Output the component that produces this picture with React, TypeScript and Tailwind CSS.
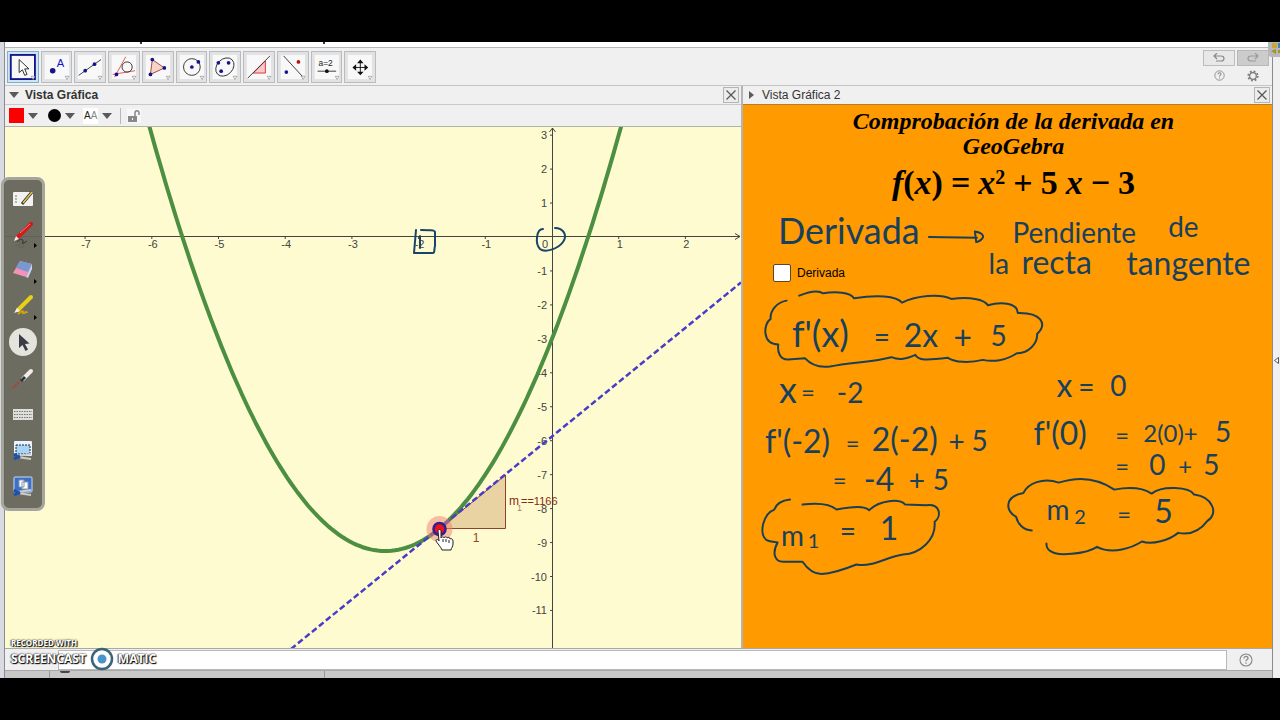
import React, { ReactNode } from "react";

const ORIGIN_X = 547;
const ORIGIN_Y = 110;
const UNIT_X = 66.7;
const UNIT_Y = 33.95;

const px = (x: number) => ORIGIN_X + x * UNIT_X;
const py = (y: number) => ORIGIN_Y - y * UNIT_Y;

const parabola = Array.from({ length: 141 }, (_, i) => {
  const x = -6.1 + i * 0.052;
  return `${px(x).toFixed(1)},${py(x * x + 5 * x - 3).toFixed(1)}`;
}).join(" ");

const dot = "#14148c";

const tools: { name: string; icon: ReactNode }[] = [
  {
    name: "Elige y mueve",
    icon: <path d="M12 8v14l3.500-3 2.500 6 2.500-1-2.500-6h4.500z" fill="#fff" stroke="#222" />,
  },
  {
    name: "Punto",
    icon: (
      <>
        <circle cx="11.500" cy="20" r="3" fill={dot} />
        <text x="16" y="16" fontSize="12" fill="#1414c8">A</text>
      </>
    ),
  },
  {
    name: "Recta",
    icon: (
      <>
        <path d="M4 25L28 8" stroke="#333" />
        <circle cx="11" cy="20" r="2" fill={dot} />
        <circle cx="21" cy="13" r="2" fill={dot} />
      </>
    ),
  },
  {
    name: "Tangentes",
    icon: (
      <>
        <path d="M6 27L18 5M4 24L28 20" stroke="#e05050" />
        <circle cx="19.500" cy="16" r="5.500" fill="none" stroke="#333" />
        <circle cx="8" cy="24" r="2" fill={dot} />
      </>
    ),
  },
  {
    name: "Polígono",
    icon: (
      <>
        <path d="M10 8l13 9-15 7z" fill="#f6d4c8" stroke="#a04040" />
        <circle cx="10" cy="8" r="2" fill={dot} />
        <circle cx="23" cy="17" r="2" fill={dot} />
        <circle cx="8" cy="24" r="2" fill={dot} />
      </>
    ),
  },
  {
    name: "Circunferencia",
    icon: (
      <>
        <circle cx="16" cy="16" r="9" fill="none" stroke="#333" />
        <circle cx="16" cy="16" r="2" fill={dot} />
        <circle cx="23" cy="10.500" r="2" fill={dot} />
      </>
    ),
  },
  {
    name: "Elipse",
    icon: (
      <>
        <ellipse cx="16" cy="16" rx="11" ry="8.500" transform="rotate(-45 16 16)" fill="none" stroke="#333" />
        <circle cx="9" cy="11.500" r="2" fill={dot} />
        <circle cx="20" cy="11.500" r="2" fill={dot} />
        <circle cx="12" cy="20.500" r="2" fill={dot} />
      </>
    ),
  },
  {
    name: "Pendiente",
    icon: (
      <>
        <path d="M10 22.500L23 9.500v13z" fill="#fbc8c8" stroke="#d83030" />
        <path d="M4 28L28 4" stroke="#333" />
      </>
    ),
  },
  {
    name: "Simetría axial",
    icon: (
      <>
        <path d="M6 4l22 24" stroke="#333" />
        <circle cx="9" cy="21.500" r="2" fill={dot} />
        <circle cx="22" cy="10.500" r="2" fill="#b01818" />
      </>
    ),
  },
  {
    name: "Deslizador",
    icon: (
      <>
        <text x="7" y="15" fontSize="9" fill="#222">a=2</text>
        <path d="M6 20.500h20" stroke="#333" />
        <circle cx="16" cy="20.500" r="2" fill="#111" />
      </>
    ),
  },
  {
    name: "Desplaza vista gráfica",
    icon: (
      <>
        <path d="M9 16.500h14M16.500 9v14" stroke="#111" />
        <path d="M16.500 8l3.500 4h-7zM16.500 25l3.500-4h-7zM8 16.500l4-3.500v7zM25 16.500l-4-3.500v7z" fill="#111" />
      </>
    ),
  },
];

function Tool({ name, icon, active }: { name: string; icon: ReactNode; active: boolean }) {
  return (
    <button
      aria-label={name}
      className={
        active
          ? "h-8 border border-[#7fb0d0] bg-[#cfe4f2]"
          : "h-8 border border-[#b8bcc0] bg-[#e2e2e2]"
      }
    >
      <svg viewBox="0 0 32 32" className="h-full w-full font-['Liberation_Sans',sans-serif]">
        <rect x="3" y="3" width="26" height="26" fill="#f8f8f8" stroke={active ? "#14148c" : "none"} strokeWidth="2" />
        {icon}
        <path d="M25 26h4l-2 3.500z" fill="#fff" stroke="#888" strokeWidth=".7" />
      </svg>
    </button>
  );
}

function Caret() {
  return (
    <svg viewBox="0 0 10 6" className="h-1.5 w-2.5">
      <path d="M0 0h10L5 6z" fill="#5a5a5a" />
    </svg>
  );
}

function CloseButton({ label }: { label: string }) {
  return (
    <button aria-label={label} className="flex size-4 items-center justify-center border border-[#b4b4b4] bg-[#ececec]">
      <svg viewBox="0 0 12 12" className="size-3">
        <path d="M1.500 1.500l9 9M10.500 1.500l-9 9" stroke="#555" strokeWidth="1.200" />
      </svg>
    </button>
  );
}

function Graph() {
  const xs = [-8, -7, -6, -5, -4, -3, -2, -1, 1, 2];
  const ys = [3, 2, 1, -1, -2, -3, -4, -5, -6, -7, -8, -9, -10, -11];
  return (
    <svg
      viewBox="0 0 736 521"
      preserveAspectRatio="xMaxYMin slice"
      className="block h-[521px] w-full bg-[#fefbd0] font-['Liberation_Sans',sans-serif] text-[11px]"
    >
      <path d="M0 109.500H735M730 106.500l5 3-5 3M547.500 521V1M544.500 5l3-4 3 4" fill="none" stroke="#444" />
      {xs.map((x) => (
        <g key={x}>
          <path d={`M${px(x)} 109v3`} stroke="#444" />
          <text x={px(x) + 1} y="121" textAnchor="middle" fill="#444">{x}</text>
        </g>
      ))}
      {ys.map((y) => (
        <g key={y}>
          <path d={`M545 ${py(y)}h3`} stroke="#444" />
          <text x="542" y={py(y) + 4} textAnchor="end" fill="#444">{y}</text>
        </g>
      ))}
      <text x="537" y="121" fill="#444">0</text>
      <polyline points={parabola} fill="none" stroke="#4c8f42" strokeWidth="4" />
      <path d="M435 401.500h65.500V348z" fill="#c08040" fillOpacity=".32" stroke="#8c4030" />
      <path d="M286 522L736 155.500" stroke="#4a3cc8" strokeWidth="2.500" strokeDasharray="6 3" />
      <text x="471" y="415" textAnchor="middle" fontSize="12" fill="#8c4a20">1</text>
      <text x="504" y="378" fontSize="12" fill="#8c2a10">m</text>
      <text x="512" y="384" fontSize="9" fill="#b08060">1</text>
      <text x="516" y="378" fontSize="11" fill="#8c2a10">==1166</text>
      <circle cx="434.500" cy="402" r="13" fill="#f08070" fillOpacity=".5" />
      <circle cx="434.500" cy="402" r="6" fill="#f01020" stroke="#30208c" strokeWidth="2.500" />
      <path
        transform="translate(-1 -1)"
        d="M434 405c0-2 3-2 3 0v7c1-2 3-1 3 0 1-2 3-1 3 0 1-1 3-1 3 1 1-1 3 0 3 2v3c0 3-2 4-2 6h-9c-1-3-5-7-6-9 0-2 2-2 3 0z"
        fill="#fff"
        stroke="#222"
      />
      <path d="M438 412v3M441 412v3M444 413v3" stroke="#222" />
      <g fill="none" stroke="#174468" strokeWidth="2" strokeLinecap="round" strokeLinejoin="round">
        <path d="M411 103l-2 23h19c2 0 1-4 2-7v-14c0-2-7-2-14-2M415 109v12" />
        <path d="M538 102c-7 0-8 15-3 20 5 4 18 0 23-7 5-7 0-14-8-14" />
      </g>
    </svg>
  );
}

type Stroke = { text: string; x: number; y: number; size: 20 | 24 | 28 | 32 | 36 };

const notes: Stroke[] = [
  { text: "Derivada", x: 35, y: 139, size: 36 },
  { text: "Pendiente", x: 270, y: 138, size: 28 },
  { text: "de", x: 426, y: 132, size: 28 },
  { text: "la", x: 246, y: 169, size: 28 },
  { text: "recta", x: 279, y: 169, size: 32 },
  { text: "tangente", x: 384, y: 170, size: 32 },
  { text: "f'(x)", x: 49, y: 242, size: 36 },
  { text: "=", x: 131, y: 242, size: 28 },
  { text: "2x", x: 161, y: 242, size: 32 },
  { text: "+", x: 211, y: 244, size: 32 },
  { text: "5", x: 248, y: 241, size: 28 },
  { text: "x", x: 36, y: 299, size: 36 },
  { text: "=", x: 58, y: 297, size: 24 },
  { text: "-2", x: 94, y: 299, size: 28 },
  { text: "f'(-2)", x: 22, y: 349, size: 32 },
  { text: "=", x: 103, y: 348, size: 24 },
  { text: "2(-2)", x: 129, y: 347, size: 32 },
  { text: "+", x: 206, y: 348, size: 28 },
  { text: "5", x: 229, y: 347, size: 28 },
  { text: "=", x: 90, y: 385, size: 24 },
  { text: "-4", x: 121, y: 387, size: 32 },
  { text: "+", x: 166, y: 387, size: 28 },
  { text: "5", x: 190, y: 386, size: 28 },
  { text: "m", x: 38, y: 442, size: 28 },
  { text: "1", x: 65, y: 444, size: 20 },
  { text: "=", x: 97, y: 437, size: 28 },
  { text: "1", x: 137, y: 436, size: 32 },
  { text: "x", x: 314, y: 293, size: 32 },
  { text: "=", x: 336, y: 293, size: 28 },
  { text: "0", x: 368, y: 292, size: 28 },
  { text: "f'(0)", x: 291, y: 341, size: 32 },
  { text: "=", x: 373, y: 340, size: 24 },
  { text: "2(0)+", x: 401, y: 338, size: 24 },
  { text: "5", x: 473, y: 338, size: 28 },
  { text: "=", x: 373, y: 371, size: 24 },
  { text: "0", x: 407, y: 371, size: 28 },
  { text: "+", x: 436, y: 371, size: 24 },
  { text: "5", x: 461, y: 371, size: 28 },
  { text: "m", x: 304, y: 416, size: 28 },
  { text: "2", x: 332, y: 420, size: 20 },
  { text: "=", x: 375, y: 419, size: 24 },
  { text: "5", x: 412, y: 419, size: 32 },
];

function Notes() {
  return (
    <svg
      viewBox="0 0 529 544"
      preserveAspectRatio="xMinYMin meet"
      className="pointer-events-none absolute inset-0 h-full w-full font-['Lato',sans-serif]"
    >
      <g fill="#17405f">
        {notes.map((n) => (
          <text key={`${n.x}-${n.y}`} x={n.x} y={n.y} fontSize={n.size}>{n.text}</text>
        ))}
      </g>
      <g fill="none" stroke="#1b3f55" strokeWidth="6" strokeLinecap="round" strokeLinejoin="round">
        <path
          transform="translate(-3 -20) scale(.3333)"
          d="M568 457L712 459M706 440L710 472M706 440C735 445 740 460 712 472"
        />
        <g transform="translate(-3 176) scale(.3333)">
          <path d="M140 60C110 65 90 90 92 115C70 130 65 190 115 192C112 215 120 238 145 237L195 233C215 255 240 262 270 258C330 245 400 245 455 230C480 240 500 235 527 223C535 240 560 240 625 232C645 246 690 248 730 238C760 245 800 240 832 218C865 220 895 190 893 160C925 130 905 95 835 97C835 70 790 60 745 74C735 55 690 48 635 55C600 38 530 45 487 66C470 45 410 42 343 53C330 35 290 32 250 38C235 28 210 32 178 45" />
          <path d="M150 658C130 660 110 670 103 688C70 700 55 760 80 780C90 785 100 785 113 787C95 820 105 845 130 845L188 845C205 870 225 882 245 882C280 880 320 865 350 853C400 862 440 830 490 823C540 820 590 780 585 725C605 710 605 670 560 675L497 673C480 655 420 658 388 690C375 675 330 680 290 688C270 670 230 668 188 673" />
        </g>
        <path
          transform="translate(257 246) scale(.3333)"
          d="M97 541C70 540 55 520 50 500C20 485 10 440 72 428C85 400 130 380 178 397C230 380 290 380 345 418C390 410 430 412 457 430C490 405 570 410 585 433C640 440 660 490 625 512C600 545 570 555 537 548C510 570 460 585 428 574C400 592 340 615 293 590C260 612 170 620 152 602C143 597 141 590 141 580"
        />
      </g>
    </svg>
  );
}

const penTools: { name: string; more?: boolean; icon: ReactNode }[] = [
  {
    name: "Pizarra",
    icon: (
      <>
        <rect x="2" y="6" width="20" height="14" rx="1" fill="#f2f2f0" />
        <path d="M5 9v8" stroke="#777" strokeDasharray="2 1" />
        <path d="M11 18L21 6" stroke="#333" strokeWidth="3" />
        <path d="M12 17L21 6" stroke="#e0c850" strokeWidth="1.500" />
      </>
    ),
  },
  {
    name: "Bolígrafo",
    more: true,
    icon: (
      <>
        <path d="M6 16L20 2" stroke="#d81818" strokeWidth="4" strokeLinecap="round" />
        <path d="M9 11L19 2" stroke="#f08080" />
        <path d="M3 19l2-5 3 3z" fill="#eee" />
        <path d="M6 20c3-4 7-3 6 0-2 2 0 2 4-1" fill="none" stroke="#333" />
      </>
    ),
  },
  {
    name: "Borrador",
    more: true,
    icon: (
      <>
        <path d="M2 15L9 3l12 3-6 13z" fill="#f590b8" />
        <path d="M9 3l12 3-4 8-12-4z" fill="#7898d0" />
        <path d="M15 19l6-13v5l-4 9z" fill="#c8d4ec" />
      </>
    ),
  },
  {
    name: "Resaltador",
    more: true,
    icon: (
      <>
        <path d="M7 16L20 3" stroke="#e8d018" strokeWidth="4" strokeLinecap="round" />
        <path d="M3 19l3-5 3 3z" fill="#eee" />
        <path d="M7 20c3-3 6-4 5-1 2 0 4-2 4 0" fill="none" stroke="#d0a010" strokeWidth="2" />
      </>
    ),
  },
  {
    name: "Seleccionar",
    icon: <path d="M8 4v14l3.500-3 3 6 2.500-1.500-3-5.500 4.500-.5z" fill="#3c3c48" />,
  },
  {
    name: "Puntero láser",
    icon: (
      <>
        <path d="M12 13L20 5" stroke="#f0ede8" strokeWidth="4" strokeLinecap="round" />
        <path d="M10 15l4-4" stroke="#333" strokeWidth="3" />
        <path d="M2 22l6-6" stroke="#b83c3c" strokeWidth="2" strokeDasharray="2 1" />
      </>
    ),
  },
  {
    name: "Teclado",
    icon: (
      <>
        <rect x="2" y="7" width="20" height="11" fill="#dededc" />
        <path d="M3 9.500h18M3 12.500h18M3 15.500h18" stroke="#77776c" strokeDasharray="1.500 1" />
      </>
    ),
  },
  {
    name: "Capturar región",
    icon: (
      <>
        <rect x="3" y="3" width="18" height="15" rx="1" fill="#e8f4ff" />
        <rect x="5" y="7" width="14" height="9" fill="#a8d4f8" stroke="#222" strokeDasharray="2 1" />
        <path d="M6 18l14-2M6 19l14 2" stroke="#ccc" strokeWidth="2" />
        <path d="M3 16l6 4M3 21l6-3" stroke="#2050a8" strokeWidth="3" />
      </>
    ),
  },
  {
    name: "Capturar pantalla",
    icon: (
      <>
        <rect x="3" y="3" width="18" height="15" rx="1" fill="#3c70c8" stroke="#c8dcf8" />
        <path d="M8 6h5v7H8zM11 8h6v7h-6z" fill="#fff" stroke="#89a" />
        <path d="M6 18l14-2M6 19l14 2" stroke="#ccc" strokeWidth="2" />
        <path d="M3 16l6 4M3 21l6-3" stroke="#2050a8" strokeWidth="3" />
      </>
    ),
  },
];

function PenPalette() {
  return (
    <aside className="absolute top-[135px] left-[1px] flex w-11 flex-col items-center gap-2 rounded-lg border-[3px] border-[#a5a59c] bg-[#64645a]/95 pt-1 pb-2">
      {penTools.map((t) => (
        <button
          key={t.name}
          aria-label={t.name}
          className={
            t.name === "Seleccionar"
              ? "relative flex size-7 items-center justify-center rounded-full bg-[#e4e4dc]"
              : "relative flex size-7 items-center justify-center"
          }
        >
          <svg viewBox="0 0 24 24" className="size-6">{t.icon}</svg>
          {t.more && (
            <svg viewBox="0 0 3 5" className="absolute right-0 bottom-0 h-[5px] w-[3px]">
              <path d="M0 0l3 2.500L0 5z" fill="#000" />
            </svg>
          )}
        </button>
      ))}
    </aside>
  );
}

function HelpIcon({ className }: { className: string }) {
  return (
    <svg viewBox="0 0 14 14" className={className}>
      <circle cx="7" cy="7" r="6" fill="none" stroke="#888" strokeWidth="1.100" />
      <path d="M5 5.500c0-3 4-2.500 4-.3C9 6.500 7 6.500 7 8.200M7 9.500v1.200" fill="none" stroke="#888" strokeWidth="1.300" />
    </svg>
  );
}

function Watermark() {
  return (
    <div className="pointer-events-none absolute bottom-[7px] left-[11px] font-['Open_Sans',sans-serif] font-bold text-white [text-shadow:1px_1px_1px_#000,-1px_0_1px_#555,0_0_2px_#000]">
      <div className="text-[8px] leading-2">RECORDED WITH</div>
      <div className="flex items-center gap-1 text-[12px] leading-6">
        <span>SCREENCAST</span>
        <svg viewBox="0 0 24 24" className="size-6">
          <circle cx="12" cy="12" r="10" fill="#fff" stroke="#3a6478" strokeWidth="2.500" />
          <circle cx="12" cy="12" r="4.500" fill="#4894cc" />
        </svg>
        <span>MATIC</span>
      </div>
    </div>
  );
}

export default function App() {
  return (
    <div className="flex min-h-screen flex-col justify-center bg-black font-['Liberation_Sans',sans-serif] text-[#333]">
      <div className="relative flex bg-[#cfcfcf]">
        <div className="w-1 shrink-0 bg-[#d8dce2]" />
        <div className="min-w-0 flex-1 border-r border-l border-[#8c8c8c]">
          <div className="flex h-1.5 border-b border-[#b0b8bc] bg-white pl-[135px]">
            <span className="h-0.5 w-0.5 bg-[#333]" />
            <span className="ml-[181px] h-0.5 w-0.5 bg-[#333]" />
          </div>
          <div className="flex h-[38px] items-center justify-between border-b border-[#c4c4c4] bg-[#f0f0f0] pl-0.5 pr-[3px]">
            <div className="grid w-[369px] grid-cols-11 gap-0.5">
              {tools.map((t, i) => (
                <Tool key={t.name} name={t.name} icon={t.icon} active={i === 0} />
              ))}
            </div>
            <div className="grid grid-cols-2 gap-x-0.5 gap-y-0.5">
              <button aria-label="Deshacer" className="flex h-4 w-8 items-center justify-center border border-[#bcbcbc] bg-[#e8e8e8]">
                <svg viewBox="0 0 12 10" className="h-2.5 w-3">
                  <path d="M4 0L1 3l3 3M1 3h7c4 0 4 5 0 5H3" fill="none" stroke="#888" strokeWidth="1.200" />
                </svg>
              </button>
              <button aria-label="Rehacer" className="flex h-4 w-8 items-center justify-center border border-[#b8b8b8] bg-[#cccccc]">
                <svg viewBox="0 0 12 10" className="h-2.5 w-3">
                  <path d="M8 0l3 3-3 3M11 3H4C0 3 0 8 4 8h5" fill="none" stroke="#999" strokeWidth="1.200" />
                </svg>
              </button>
              <button aria-label="Ayuda" className="flex h-4 items-center justify-center">
                <HelpIcon className="size-[11px]" />
              </button>
              <button aria-label="Preferencias" className="flex h-4 items-center justify-center">
                <svg viewBox="0 0 12 12" className="size-3">
                  <circle cx="6" cy="6" r="4.700" fill="none" stroke="#777" strokeWidth="1.800" strokeDasharray="1.800 1.890" />
                  <circle cx="6" cy="6" r="3.300" fill="none" stroke="#777" strokeWidth="1.200" />
                </svg>
              </button>
            </div>
          </div>

          <div className="grid grid-cols-[738fr_529fr]">
            <section className="min-w-0 border-r-2 border-[#b4b4b4] bg-[#f0f0f0]">
              <header className="flex h-[19px] items-center gap-1.5 border-b border-[#c8c8c8] pr-0.5 pl-1">
                <Caret />
                <h2 className="flex-1 text-[12px] leading-4 font-bold">Vista Gráfica</h2>
                <CloseButton label="Cerrar Vista Gráfica" />
              </header>
              <div className="flex h-[22px] items-center border-b border-[#b0b4a8] pl-1">
                <button aria-label="Color" className="flex items-center gap-1">
                  <span className="size-[15px] bg-[#fa0000]" />
                  <Caret />
                </button>
                <button aria-label="Estilo de punto" className="ml-2.5 flex items-center gap-1">
                  <span className="size-[13px] rounded-full bg-black" />
                  <Caret />
                </button>
                <button aria-label="Tamaño de texto" className="ml-2 flex items-center gap-1">
                  <span className="bg-white px-px text-[10px] leading-4 text-[#222]">
                    A<span className="text-[#888]">A</span>
                  </span>
                  <Caret />
                </button>
                <span className="ml-2 h-4 w-px bg-[#b8b8b8]" />
                <button aria-label="Fijar objeto" className="ml-1.5 bg-[#f8f8f8]">
                  <svg viewBox="0 0 14 14" className="size-3.5">
                    <path d="M8 7V4c0-3 4-3 4 0v2" fill="none" stroke="#888" strokeWidth="1.500" />
                    <rect x="1" y="7" width="9" height="6" fill="#888" />
                    <path d="M5.500 9v2" stroke="#fff" />
                  </svg>
                </button>
              </div>
              <Graph />
            </section>

            <section className="flex min-w-0 flex-col bg-[#f0f0f0]">
              <header className="flex h-[19px] items-center gap-2 border-b border-[#b08030] pr-0.5 pl-1.5">
                <svg viewBox="0 0 5 8" className="h-2 w-[5px]">
                  <path d="M0 0l5 4-5 4z" fill="#5a5a5a" />
                </svg>
                <h2 className="flex-1 text-[12px] leading-4">Vista Gráfica 2</h2>
                <CloseButton label="Cerrar Vista Gráfica 2" />
              </header>
              <div className="relative flex-1 bg-[#ff9a00] text-black">
                <div className="flex flex-col items-center pt-1 pl-3 font-['Liberation_Serif',serif] font-bold italic">
                  <p className="text-[24px] leading-[25px]">Comprobación de la derivada en</p>
                  <p className="text-[24px] leading-[25px]">GeoGebra</p>
                  <p className="mt-1 flex items-baseline gap-2 text-[34px] leading-10">
                    <span>f<span className="not-italic">(</span>x<span className="not-italic">)</span></span>
                    <span className="not-italic">=</span>
                    <span>x<sup className="text-[20px] leading-none not-italic">2</sup></span>
                    <span className="not-italic">+</span>
                    <span className="not-italic">5</span>
                    <span>x</span>
                    <span className="not-italic">−</span>
                    <span className="not-italic">3</span>
                  </p>
                </div>
                <label className="mt-[61px] ml-[30px] flex w-fit items-center gap-1.5 text-[12px] leading-[18px]">
                  <input type="checkbox" className="size-[18px] appearance-none rounded-xs border border-[#5c4630] bg-white" />
                  Derivada
                </label>
                <Notes />
              </div>
            </section>
          </div>

          <div className="flex h-[23px] items-center border-t border-b border-[#a8a8a8] bg-[#f0f0f0] pl-[53px]">
            <input aria-label="Entrada" className="h-5 min-w-0 flex-1 border border-[#b8b8b8] bg-white px-1 text-[12px]" />
            <button aria-label="Ayuda de entrada" className="flex w-[45px] items-center justify-center pr-2">
              <HelpIcon className="size-3.5" />
            </button>
          </div>
          <div className="flex h-[7px] bg-[#c8c8c8]">
            <div className="w-[45px] border-r border-[#999]" />
            <div className="w-[275px] border-r border-[#999]">
              <div className="ml-2.5 h-0.5 w-2.5 rounded-b-full bg-[#444]" />
            </div>
          </div>
        </div>
        <div className="flex w-[7px] shrink-0 items-center justify-center bg-[#f0f0f0]">
          <svg viewBox="0 0 5 7" className="h-[7px] w-[5px]">
            <path d="M4.500.5v6L.5 3.500z" fill="#fff" stroke="#555" />
          </svg>
        </div>
        <div className="absolute top-0 right-0 h-[15px] w-3 rounded-bl bg-[#b8b8b8]">
          <svg viewBox="0 0 12 15" className="h-full w-full">
            <path d="M4 1h5v5H4z" fill="#c8a830" />
            <path d="M10 1h2v5h-2z" fill="#4080b8" />
            <path d="M3 9l5-2v5zM10 8h2v3h-2z" fill="#a89028" />
          </svg>
        </div>
        <PenPalette />
        <Watermark />
      </div>
    </div>
  );
}
